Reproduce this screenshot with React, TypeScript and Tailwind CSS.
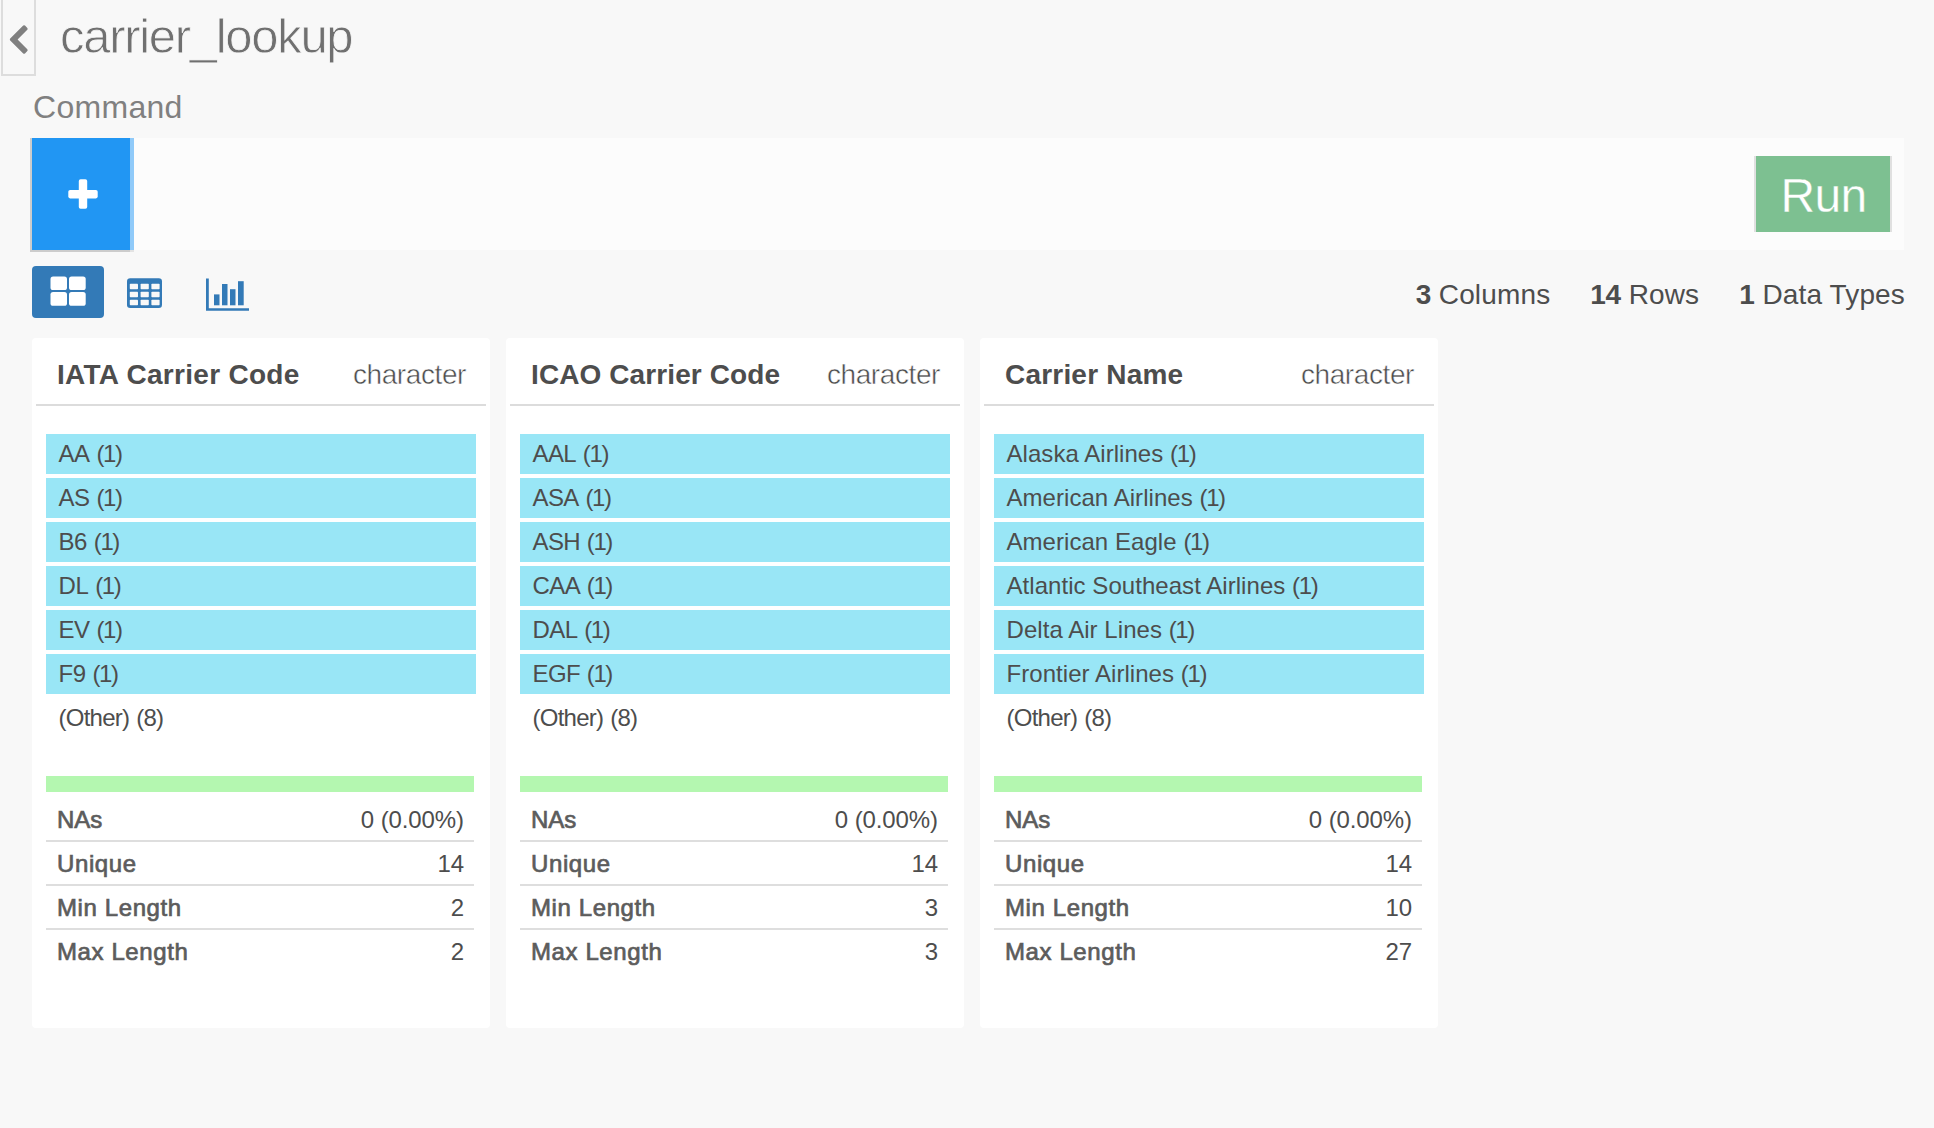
type Column = {
  name: string;
  titleClass: string;
  nameClass: string;
  values: string[];
  minLength: number;
  maxLength: number;
};

const COLUMNS: Column[] = [
  {
    name: "IATA Carrier Code",
    titleClass: "tracking-[0.3px]",
    nameClass: "tracking-[-0.4px]",
    values: ["AA", "AS", "B6", "DL", "EV", "F9"],
    minLength: 2,
    maxLength: 2,
  },
  {
    name: "ICAO Carrier Code",
    titleClass: "tracking-[0.1px]",
    nameClass: "tracking-[-0.6px]",
    values: ["AAL", "ASA", "ASH", "CAA", "DAL", "EGF"],
    minLength: 3,
    maxLength: 3,
  },
  {
    name: "Carrier Name",
    titleClass: "tracking-[0.2px]",
    nameClass: "tracking-[0.05px]",
    values: [
      "Alaska Airlines",
      "American Airlines",
      "American Eagle",
      "Atlantic Southeast Airlines",
      "Delta Air Lines",
      "Frontier Airlines",
    ],
    minLength: 10,
    maxLength: 27,
  },
];

function ChevronIcon() {
  return (
    <svg width="20" height="32" viewBox="0 0 20 32" fill="#808080">
      <path d="M14.2 1.6a1.3 1.3 0 0 1 1.8 0l2.3 2.3a1.3 1.3 0 0 1 0 1.8L8.6 15.5l9.7 9.7a1.3 1.3 0 0 1 0 1.8L16 29.4a1.3 1.3 0 0 1-1.8 0L1.2 16.4a1.3 1.3 0 0 1 0-1.8z" />
    </svg>
  );
}

function PlusIcon() {
  return (
    <svg width="30" height="30" viewBox="0 0 30 30" fill="#fff">
      <rect x="0.3" y="11" width="29.4" height="8.4" rx="1.8" />
      <rect x="10.8" y="0.3" width="8.4" height="29.5" rx="1.8" />
    </svg>
  );
}

function TilesIcon() {
  return (
    <svg width="36" height="30" viewBox="0 0 36 30" fill="#fff">
      <rect x="0.5" y="0.5" width="16.5" height="13.5" rx="2.6" />
      <rect x="19" y="0.5" width="16.7" height="13.5" rx="2.6" />
      <rect x="0.5" y="16" width="16.5" height="13.8" rx="2.6" />
      <rect x="19" y="16" width="16.7" height="13.8" rx="2.6" />
    </svg>
  );
}

function TableIcon() {
  return (
    <svg width="36" height="30" viewBox="0 0 36 30">
      <rect x="0" y="0.3" width="35" height="29.7" rx="3.2" fill="#337ab7" />
      <g fill="#f8f8f8">
        {[5.7, 13.7, 21.7].map((y) =>
          [2.8, 13.6, 24.4].map((x) => (
            <rect key={`${x}-${y}`} x={x} y={y} width="8.2" height="5.6" rx="0.7" />
          )),
        )}
      </g>
    </svg>
  );
}

function ChartIcon() {
  return (
    <svg width="44" height="34" viewBox="0 0 44 34" fill="#337ab7">
      <path d="M0 0.4h2.8v29.8H43v2.6H0z" />
      <rect x="8" y="16.4" width="5.5" height="10.9" />
      <rect x="16" y="6" width="5.5" height="21.3" />
      <rect x="24" y="11.2" width="5.5" height="16.1" />
      <rect x="32" y="3.2" width="5.7" height="24.1" />
    </svg>
  );
}

function Stat({ count, label }: { count: number; label: string }) {
  return (
    <div className="whitespace-nowrap tracking-[0.15px]">
      <b className="tracking-[-0.4px]">{count}</b> {label}
    </div>
  );
}

function SummaryRow({ label, value, labelClass = "tracking-[0.6px]" }: { label: string; value: string | number; labelClass?: string }) {
  return (
    <div className="flex h-11 justify-between border-b-2 border-[#dedede] pt-[2px] pr-[10px] pl-[11px] leading-10 last:border-transparent">
      <span className={`text-[#5c5c5c] [-webkit-text-stroke:0.7px_#5c5c5c] ${labelClass}`}>{label}</span>
      <span className="tracking-[-0.1px]">{value}</span>
    </div>
  );
}

function ColumnCard({ column }: { column: Column }) {
  return (
    <section className="h-[690px] w-[458px] rounded bg-white px-1">
      <header className="flex h-[68px] items-start justify-between border-b-2 border-[#dcdcdc] pt-[7px] pr-5 pl-[21px] text-[28px] leading-[60px]">
        <h2 className={`font-bold whitespace-nowrap ${column.titleClass}`}>{column.name}</h2>
        <span className="tracking-[-0.4px] [-webkit-text-stroke:0.5px_#fff]">character</span>
      </header>
      <div className="px-[10px] pt-7 text-2xl">
        <ul className="flex flex-col gap-1">
          {column.values.map((value) => (
            <li key={value} className="h-10 bg-[#99e6f6] pl-[12.5px] leading-10">
              <span className={column.nameClass}>{value}</span>
              <span className="tracking-[-1.4px] [word-spacing:1.5px]"> (1)</span>
            </li>
          ))}
          <li className="h-10 pl-[12.5px] leading-10 tracking-[-0.75px] [word-spacing:1px]">(Other) (8)</li>
        </ul>
        <div className="mt-[38px] mr-[2px] h-4 bg-[#b4f7b0]" />
        <div className="mt-[6px] mr-[2px]">
          <SummaryRow label="NAs" value="0 (0.00%)" labelClass="tracking-[0px]" />
          <SummaryRow label="Unique" value={14} />
          <SummaryRow label="Min Length" value={column.minLength} />
          <SummaryRow label="Max Length" value={column.maxLength} />
        </div>
      </div>
    </section>
  );
}

export default function App() {
  return (
    <div className="h-[1128px] w-[1934px] overflow-hidden bg-[#f8f8f8] font-['Liberation_Sans',Arial,sans-serif] text-[#4d4d4d]">
      <header className="flex h-[87px] items-start pl-px">
        <button className="flex h-[76px] w-[35px] justify-center border-2 border-t-0 border-[#ddd] pt-6">
          <ChevronIcon />
        </button>
        <h1 className="ml-6 pt-[5px] text-[49px] leading-[62px] tracking-[-1.3px] text-[#707070] [-webkit-text-stroke:0.8px_#f8f8f8]">
          carrier_lookup
        </h1>
      </header>

      <div className="h-[51px] pl-[33px] text-[32px] leading-10 tracking-[0.3px] text-[#808080]">Command</div>

      <div className="mr-[30px] ml-[30px] flex h-[114px] items-start justify-between">
        <div className="flex h-[112px] flex-1 justify-between bg-[#fcfcfc]">
          <div className="flex h-[114px]">
            <button className="flex w-[100px] items-center justify-center border-b-2 border-l-2 border-[#ccc] bg-[#2196f3] pl-1">
              <PlusIcon />
            </button>
            <div className="w-1 border-b-2 border-[#e3e3e3] bg-[#90caf9]" />
          </div>
          <button className="mt-[18px] mr-3 h-[76px] w-[138px] border-x-2 border-[#e0e0e0] bg-[#7dc091] pt-px pl-px text-center text-5xl leading-[78px] tracking-[-0.7px] text-white [-webkit-text-stroke:0.4px_#7dc091]">
            Run
          </button>
        </div>
      </div>

      <div className="mt-[14px] flex h-[52px] justify-between pr-[29px] pl-8">
        <nav className="flex">
          <button className="flex h-[52px] w-[72px] justify-center rounded bg-[#337ab7] pt-[10px]">
            <TilesIcon />
          </button>
          <button className="ml-[23px] flex pt-3">
            <TableIcon />
          </button>
          <button className="ml-[43px] flex pt-3">
            <ChartIcon />
          </button>
        </nav>
        <div className="flex gap-10 pt-[3px] text-[28px] leading-[52px]">
          <Stat count={3} label="Columns" />
          <Stat count={14} label="Rows" />
          <Stat count={1} label="Data Types" />
        </div>
      </div>

      <main className="mt-5 flex gap-4 pl-8">
        {COLUMNS.map((column) => (
          <ColumnCard key={column.name} column={column} />
        ))}
      </main>
    </div>
  );
}
